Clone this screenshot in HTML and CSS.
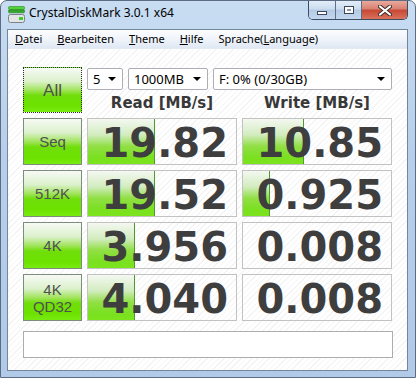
FILE: index.html
```html
<!DOCTYPE html>
<html lang="de">
<head>
  <meta charset="UTF-8" />
  <title>CrystalDiskMark 3.0.1 x64</title>
  <link rel="stylesheet" href="styles.css">
</head>
<body>
  <div class="window">
    <div class="titlebar">
      <svg class="app-icon" width="17" height="17" viewBox="0 0 17 17">
        <rect x="0.5" y="0.5" width="16" height="3" rx="1" fill="#52d13a" stroke="#2f8f22" stroke-width="0.6"/>
        <rect x="0.5" y="3.8" width="16" height="3" rx="1" fill="#34a82a" stroke="#2a7f1e" stroke-width="0.6"/>
        <rect x="0.5" y="8.5" width="16" height="8" rx="2" fill="#e2e4e6" stroke="#7c8288"/>
        <rect x="11" y="11" width="4" height="3" fill="#3ccf2a"/>
      </svg>
      <span class="title">CrystalDiskMark 3.0.1 x64</span>
      <div class="caption-buttons">
        <div class="cap-btn cap-min"><span class="min-glyph"></span></div>
        <div class="cap-btn cap-max"><span class="max-glyph"></span></div>
        <div class="cap-btn cap-close">
          <svg width="14" height="11" viewBox="0 0 14 11">
            <path d="M2 1.5 L12 9.5 M12 1.5 L2 9.5" stroke="#3a2a2a" stroke-width="4" stroke-linecap="round"/>
            <path d="M2 1.5 L12 9.5 M12 1.5 L2 9.5" stroke="#fff" stroke-width="2.2" stroke-linecap="round"/>
          </svg>
        </div>
      </div>
    </div>

    <div class="frame">
      <div class="inner">
        <ul class="menubar">
          <li><u>D</u>atei</li>
          <li><u>B</u>earbeiten</li>
          <li><u>T</u>heme</li>
          <li><u>H</u>ilfe</li>
          <li>Sprache(<u>L</u>anguage)</li>
        </ul>

        <div class="client">
          <div class="bench-grid">
            <div class="btn btn-all">All</div>
            <div class="controls">
              <div class="combos">
                <div class="combo combo-count">5</div>
                <div class="combo combo-size">1000MB</div>
                <div class="combo combo-drive">F: 0% (0/30GB)</div>
              </div>
              <div class="headers">
                <div>Read [MB/s]</div>
                <div>Write [MB/s]</div>
              </div>
            </div>

            <div class="btn">Seq</div>
            <div class="result"><div class="bar" style="width: 45.5%;"></div><span>19.82</span></div>
            <div class="result"><div class="bar" style="width: 41.5%;"></div><span>10.85</span></div>

            <div class="btn">512K</div>
            <div class="result"><div class="bar" style="width: 45.5%;"></div><span>19.52</span></div>
            <div class="result"><div class="bar" style="width: 18.5%;"></div><span>0.925</span></div>

            <div class="btn">4K</div>
            <div class="result"><div class="bar" style="width: 31.5%;"></div><span>3.956</span></div>
            <div class="result"><span>0.008</span></div>

            <div class="btn">4K<br>QD32</div>
            <div class="result"><div class="bar" style="width: 32%;"></div><span>4.040</span></div>
            <div class="result"><span>0.008</span></div>
          </div>
          <div class="comment"></div>
        </div>
      </div>
    </div>
  </div>
</body>
</html>
```

FILE: styles.css
```css
* { box-sizing: border-box; }
body { margin: 0; background: #fff; font-family: "Noto Sans", sans-serif; }

/* window chrome */
.window { width: 416px; height: 378px; display: flex; flex-direction: column; border: 1px solid #5c6c84; border-radius: 7px 7px 0 0; background: linear-gradient(#c8ddf2, #b7cfea 40%, #b0cae8); overflow: hidden; }
.titlebar { height: 28px; display: flex; align-items: flex-start; padding-right: 7px; flex-shrink: 0; }
.app-icon { margin: 5px 0 0 7px; }
.title { margin: 4px 0 0 4px; font-size: 12px; line-height: 16px; color: #000; }
.caption-buttons { margin-left: auto; display: flex; height: 19px; border: 1px solid #3e4c62; border-top: none; border-radius: 0 0 5px 5px; overflow: hidden; }
.cap-btn { display: flex; align-items: center; justify-content: center; background: linear-gradient(#e3edf8, #cbdcef 45%, #b4cae4 50%, #c3d7ee); }
.cap-min { width: 27px; border-right: 1px solid #5d6f89; }
.cap-max { width: 26px; border-right: 1px solid #5d6f89; }
.cap-close { width: 45px; background: linear-gradient(#e8a99c, #d88070 45%, #c74733 50%, #d9735d); }
.min-glyph { width: 10px; height: 4px; margin-top: 5px; background: #fff; border: 1px solid #3c4758; }
.max-glyph { width: 10px; height: 8px; border: 1px solid #3c4758; background: #fff; box-shadow: inset 0 0 0 2px #fff, inset 0 0 0 3px #8a99ad; }

.frame { flex: 1; display: flex; padding: 0 7px 6px 6px; }
.inner { flex: 1; display: flex; flex-direction: column; border: 1px solid #74869e; background: #fff; }

.menubar { height: 19px; flex-shrink: 0; display: flex; align-items: center; gap: 15px; list-style: none; margin: 0; padding: 0 0 1px 7px; font-size: 11px; color: #000; background: linear-gradient(#fbfcfe, #f0f4fa 50%, #dfe8f3); border-bottom: 1px solid #e4eaf2; }

/* client area */
.client { flex: 1; padding: 18px 0 0 15px; background: repeating-linear-gradient(135deg, #fff 0 3px, #f4f4f4 3px 4px); }
.bench-grid { display: grid; grid-template-columns: 59px 150px 150px; grid-template-rows: 46px repeat(4, 47px); gap: 5px; }

.btn { display: flex; align-items: center; justify-content: center; text-align: center; border: 1px solid #7d8c7d; font-family: "Liberation Sans", sans-serif; font-size: 15px; line-height: 17px; color: #505050; background: linear-gradient(#f7faf5, #dcf1cd 30%, #a2e45e 50%, #70de0a 62%, #6ce200 85%, #78ea10); }
.btn-all { font-size: 17px; border: 1px dotted #2c2c2c; }

.controls { grid-column: span 2; display: flex; flex-direction: column; padding-top: 1px; }
.combos { display: flex; gap: 5px; }
.combo { height: 22px; display: flex; align-items: center; justify-content: space-between; padding: 0 6px 0 5px; border: 1px solid #acb0b6; border-radius: 2px; background: #fff; font-size: 13px; color: #000; }
.combo::after { content: ""; border-left: 4px solid transparent; border-right: 4px solid transparent; border-top: 4px solid #000; }
.combo-count { width: 36px; }
.combo-size { width: 80px; }
.combo-drive { width: 179px; }
.headers { display: grid; grid-template-columns: 150px 150px; gap: 5px; padding-top: 3px; font-family: "DejaVu Sans", sans-serif; font-weight: bold; font-size: 15px; line-height: 20px; color: #383838; text-align: center; }

.result { position: relative; display: flex; align-items: center; justify-content: flex-end; padding: 2px 8px 0 0; border: 1px solid #c2c2c2; font-family: "DejaVu Sans", sans-serif; font-weight: bold; font-size: 40px; color: #3e3e3e; }
.result span { position: relative; }
.bar { position: absolute; left: 0; top: 0; bottom: 0; border-right: 1px solid #4f9a30; background: linear-gradient(#f4f8f1, #d2ecc0 35%, #92df46 60%, #7ae020 85%, #7ce41c); }

.comment { margin-top: 10px; width: 370px; height: 27px; border: 1px solid #adadad; background: #fff; }
```
